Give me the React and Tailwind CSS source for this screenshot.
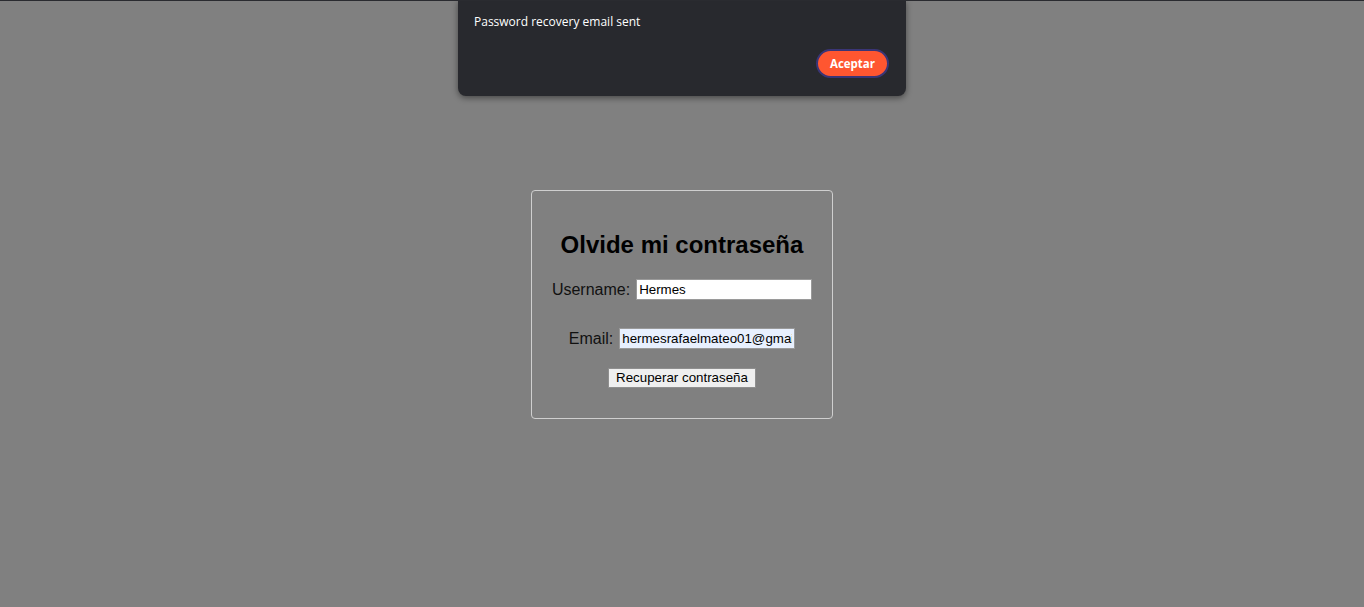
export default function App() {
  return (
    <div className="relative h-[607px] w-full overflow-hidden border-t border-[#2a2b30] bg-[#808080] font-['Liberation_Sans',Arial,sans-serif]">
      {/* Toast dialog */}
      <div className="absolute left-1/2 top-[-1px] z-10 h-[96px] w-[448px] -translate-x-1/2 rounded-b-lg bg-[#28292e] shadow-[0_2px_6px_rgba(0,0,0,0.45)]">
        <div className="flex h-full flex-col px-4 pt-[13px] pb-[18px] font-['Open_Sans',sans-serif]">
          <p className="text-[12px] leading-[17px] text-white">Password recovery email sent</p>
          <div className="mt-auto flex justify-end">
            <button className="mr-[1px] h-[29px] w-[73px] rounded-full border-2 border-[#3a3576] bg-[#ff5630] text-[11.5px] font-bold text-white">
              Aceptar
            </button>
          </div>
        </div>
      </div>

      {/* Centered card */}
      <div className="flex h-full items-center justify-center">
        <div className="w-[302px] rounded border border-[#cfcfcf] px-5 pt-5 pb-[30px] text-center">
          <h2 className="mt-5 mb-5 text-[24px] font-bold leading-[28px] text-black">Olvide mi contraseña</h2>
          <div className="flex h-[21px] items-center justify-center">
            <label className="text-[16px] leading-[21px] text-[#111]">Username:</label>
            <input
              readOnly
              value="Hermes"
              className="ml-[6px] h-[21px] w-[176px] border border-[#9a9a9a] bg-white px-[2px] text-[13.33px] text-black outline-none"
            />
          </div>
          <div className="mt-[28px] flex h-[21px] items-center justify-center">
            <label className="text-[16px] leading-[21px] text-[#111]">Email:</label>
            <input
              readOnly
              value="hermesrafaelmateo01@gmail.com"
              className="ml-[6px] h-[21px] w-[176px] border border-[#9a9a9a] bg-[#e8f0fe] px-[2px] text-[13.33px] text-black outline-none"
            />
          </div>
          <div className="mt-[19px] flex justify-center">
            <button className="h-[20px] w-[148px] border border-[#8f8f8f] bg-[#efefef] text-[13.33px] leading-[18px] text-black">
              Recuperar contraseña
            </button>
          </div>
        </div>
      </div>
    </div>
  );
}
